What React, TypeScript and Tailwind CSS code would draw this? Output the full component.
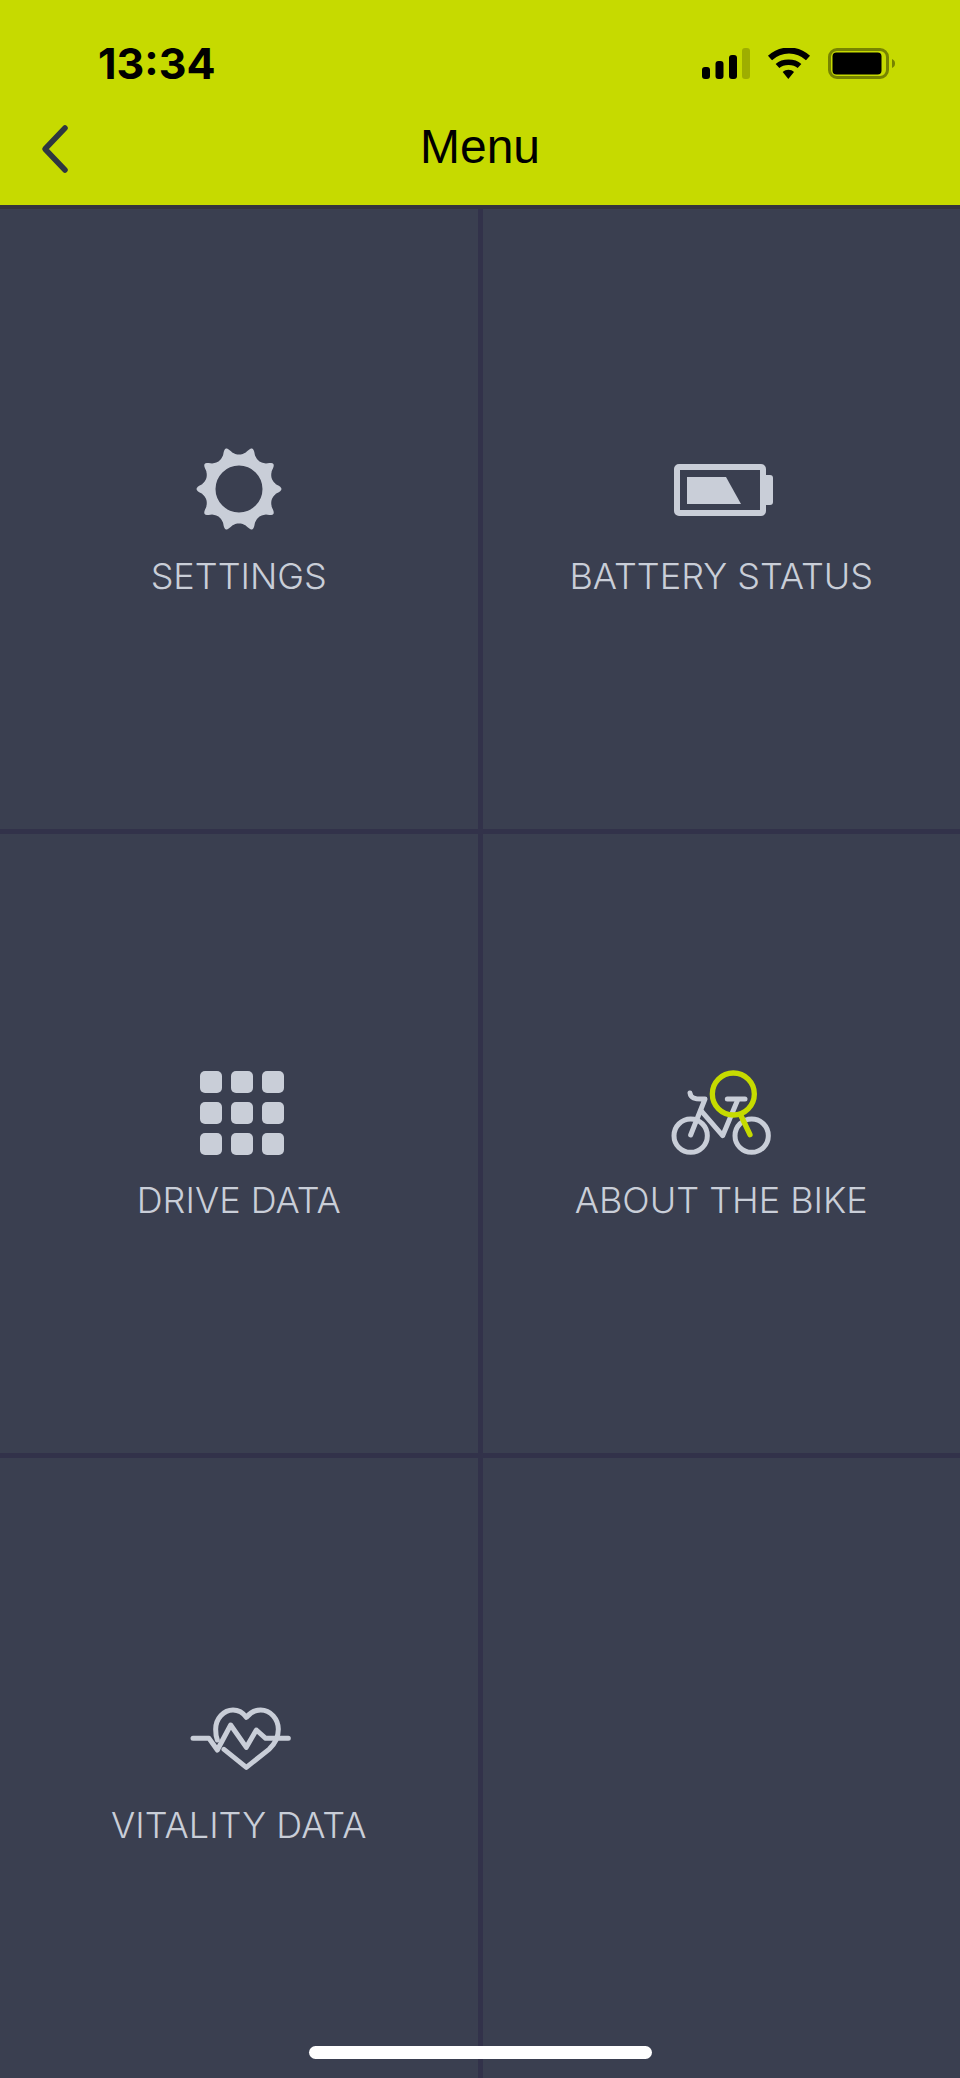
const gearPath = () => {
  const pts: string[] = []
  for (let i = 0; i < 240; i++) {
    const a = (i / 240) * Math.PI * 2
    const c = Math.cos(a * 10)
    const r = 36.5 + 6 * (c > 0 ? Math.pow(c, 1.6) : -Math.pow(-c, 0.8) * 0.35)
    pts.push(`${i === 0 ? 'M' : 'L'}${(70 + r * Math.cos(a)).toFixed(2)} ${(47 + r * Math.sin(a)).toFixed(2)}`)
  }
  return pts.join(' ') + ' Z'
}

const IconColor = '#c9ced8'

const GearIcon = () => (
  <svg width="140" height="92" viewBox="0 0 140 92">
    <path fillRule="evenodd" fill={IconColor} d={gearPath() + ' M93.5 47 A23.5 23.5 0 1 0 46.5 47 A23.5 23.5 0 1 0 93.5 47 Z'} />
  </svg>
)

const BatteryIcon = () => (
  <svg width="140" height="92" viewBox="0 0 140 92">
    <rect x="26" y="25" width="86" height="46" rx="2" fill="none" stroke={IconColor} strokeWidth="6" />
    <path d="M115 33 h4 a3 3 0 0 1 3 3 v24 a3 3 0 0 1 -3 3 h-4 Z" fill={IconColor} />
    <path d="M36 35 H75 L90 62 H36 Z" fill={IconColor} />
  </svg>
)

const GridIcon = () => (
  <svg width="140" height="92" viewBox="0 0 140 92">
    {[0, 31, 62].map((y) =>
      [0, 31, 62].map((x) => (
        <rect key={`${x}-${y}`} x={31 + x} y={5 + y} width="22" height="22" rx="5" fill={IconColor} />
      ))
    )}
  </svg>
)

const BikeIcon = () => (
  <svg width="140" height="92" viewBox="3 51 420 276" fill="none" strokeLinecap="round" strokeLinejoin="round">
    <g stroke={IconColor} strokeWidth="15">
      <circle cx="122" cy="260" r="50" />
      <circle cx="305" cy="260" r="50" />
      <path d="M120 132 C122 146 132 152 165 150 L122 258" />
      <path d="M153 185 L218 260 L262 155" />
      <path d="M232 150 H285" />
    </g>
    <g stroke="#c6db00" strokeWidth="16">
      <circle cx="250" cy="135" r="63" />
      <path d="M272 198 L300 257" />
    </g>
  </svg>
)

const HeartIcon = () => (
  <svg width="140" height="92" viewBox="0 3 420 276" fill="none" stroke={IconColor} strokeWidth="15" strokeLinecap="round" strokeLinejoin="round">
    <path d="M72 145 H120 L145 180 L185 105 L232 172 L262 120 L290 145 H358" />
    <path d="M145 150 C141 140 140 130 140 118 C140 85 165 60 192 60 C208 60 222 68 232 82 C243 68 257 60 275 60 C305 60 328 88 328 118 C328 145 318 162 300 178 L232 232 L165 178" />
  </svg>
)

const StatusIcons = () => (
  <svg width="193" height="31" viewBox="0 0 193 31">
    <rect x="0" y="19" width="8" height="12" rx="3" fill="#000" />
    <rect x="13.5" y="13" width="8" height="18" rx="3" fill="#000" />
    <rect x="27" y="7" width="8" height="24" rx="3" fill="#000" />
    <rect x="40" y="0" width="8" height="31" rx="3" fill="#000" fillOpacity="0.2" />
    <path d="M68 10 C79 0 95 0 106 10" fill="none" stroke="#000" strokeWidth="6" />
    <path d="M75.5 18 C81 13 92 13 97.5 18" fill="none" stroke="#000" strokeWidth="5.5" />
    <path d="M80.7 24 C84 21 89 21 92 24 L86.3 31 Z" fill="#000" />
    <rect x="127.5" y="1.5" width="58" height="28" rx="7.5" fill="none" stroke="#000" strokeOpacity="0.4" strokeWidth="3" />
    <rect x="130.5" y="4.5" width="49" height="22" rx="4" fill="#000" />
    <path d="M190 11 C192.5 12 193 14 193 15.5 C193 17 192.5 19 190 20 Z" fill="#000" fillOpacity="0.4" />
  </svg>
)

const items = [
  { label: 'SETTINGS', icon: <GearIcon /> },
  { label: 'BATTERY STATUS', icon: <BatteryIcon /> },
  { label: 'DRIVE DATA', icon: <GridIcon /> },
  { label: 'ABOUT THE BIKE', icon: <BikeIcon /> },
  { label: 'VITALITY DATA', icon: <HeartIcon /> },
]

const App = () => {
  return (
    <div className="relative w-full h-[2078px] flex flex-col bg-[#32324a] font-['Inter',sans-serif]">
      <header className="h-[209px] shrink-0 bg-[#c6da00] border-b-4 border-[#33343c]">
        <div className="flex justify-between items-center pt-[48px] pl-[98px] pr-[65px] h-[79px]">
          <span className="text-[43px] leading-[31px] font-bold text-black">13:34</span>
          <StatusIcons />
        </div>
        <div className="grid grid-cols-[1fr_auto_1fr] items-center mt-[41px] h-[54px]">
          <svg width="30" height="54" viewBox="0 0 30 54" className="ml-[40px]" fill="none" stroke="#2f3640" strokeWidth="5.5" strokeLinecap="round" strokeLinejoin="round">
            <path d="M25 8 L5 29 L25 50" />
          </svg>
          <h1 className="text-[48px] leading-[54px] font-normal text-black font-['Liberation_Sans',sans-serif]">Menu</h1>
          <div />
        </div>
      </header>
      <div className="flex-1 grid grid-cols-2 grid-rows-3 gap-[5px]">
        {items.map((item) => (
          <div key={item.label} className="bg-[#3a3f50] flex flex-col items-center justify-center">
            {item.icon}
            <p className="mt-[22px] text-[36px] leading-[40px] font-light text-[#c9ced8]">{item.label}</p>
          </div>
        ))}
        <div className="bg-[#3a3f50]" />
      </div>
      <div className="absolute bottom-[19px] left-[309px] w-[343px] h-[13px] rounded-full bg-white" />
    </div>
  )
}

export default App
